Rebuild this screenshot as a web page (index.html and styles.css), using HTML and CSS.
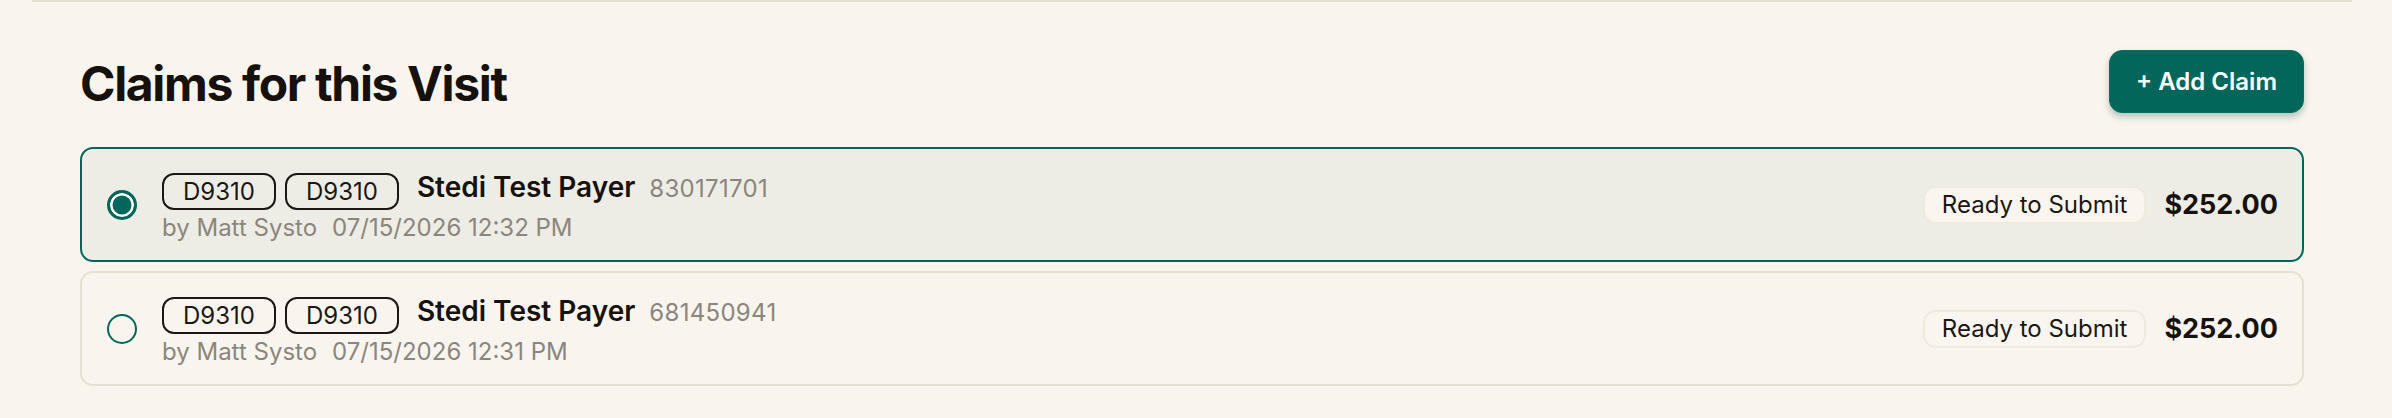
FILE: index.html
```html
<!DOCTYPE html>
<html lang="en">
<head>
<meta charset="utf-8">
<title>Claims for this Visit</title>
<link rel="stylesheet" href="styles.css">
</head>
<body>
<section class="claims">
  <header class="claims-head">
    <h2 class="claims-title">Claims for this Visit</h2>
    <button class="btn-add" type="button">+ Add Claim</button>
  </header>
  <div class="claim-list">
    <div class="claim claim--selected">
      <span class="radio radio--checked"></span>
      <div class="claim-main">
        <div class="claim-row">
          <div class="codes">
            <span class="code">D9310</span>
            <span class="code">D9310</span>
          </div>
          <div class="payer">
            <span class="payer-name">Stedi Test Payer</span>
            <span class="payer-id">830171701</span>
          </div>
        </div>
        <div class="claim-meta">
          <span>by Matt Systo</span>
          <span>07/15/2026 12:32 PM</span>
        </div>
      </div>
      <div class="claim-side">
        <span class="status">Ready to Submit</span>
        <span class="amount">$252.00</span>
      </div>
    </div>
    <div class="claim">
      <span class="radio"></span>
      <div class="claim-main">
        <div class="claim-row">
          <div class="codes">
            <span class="code">D9310</span>
            <span class="code">D9310</span>
          </div>
          <div class="payer">
            <span class="payer-name">Stedi Test Payer</span>
            <span class="payer-id">681450941</span>
          </div>
        </div>
        <div class="claim-meta">
          <span>by Matt Systo</span>
          <span>07/15/2026 12:31 PM</span>
        </div>
      </div>
      <div class="claim-side">
        <span class="status">Ready to Submit</span>
        <span class="amount">$252.00</span>
      </div>
    </div>
  </div>
</section>
</body>
</html>
```
FILE: styles.css
```css
* { box-sizing: border-box; }

html, body {
  margin: 0;
  padding: 0;
  background: #f9f5ee;
}

body {
  font-family: Inter, "Noto Sans", "Liberation Sans", sans-serif;
  color: #17120e;
  height: 418px;
  overflow: hidden;
}

.claims {
  margin: 0 40px 0 32px;
  border-top: 2px solid #e5e0d3;
  padding: 48px 48px 0;
}

.claims-head {
  display: flex;
  align-items: center;
  justify-content: space-between;
  height: 63px;
  margin-bottom: 34px;
}

.claims-title {
  margin: 0;
  font-size: 48px;
  font-weight: 700;
  line-height: 63px;
  letter-spacing: -1.35px;
  color: #17110d;
  position: relative;
  top: 2px;
}

.btn-add {
  height: 63px;
  padding: 0 26px;
  border: 1px solid #0b6d61;
  border-radius: 13px;
  background: #02665a;
  color: #ffffff;
  font-family: Inter, "Noto Sans", sans-serif;
  font-size: 24px;
  font-weight: 600;
  box-shadow: 0 4px 7px rgba(0, 70, 60, 0.28);
}

.claim-list {
  display: flex;
  flex-direction: column;
  gap: 9px;
}

.claim {
  display: flex;
  align-items: center;
  gap: 25px;
  height: 115px;
  padding: 0 24px 0 25px;
  border: 2px solid #e5e0d2;
  border-radius: 13px;
  background: #f9f5ee;
}

.claim--selected {
  border-color: #02665a;
  background: #eeede5;
}

.radio {
  flex: none;
  width: 30px;
  height: 30px;
  border: 2px solid #02665a;
  border-radius: 50%;
}

.radio--checked {
  border-width: 3px;
  background: #02665a;
  box-shadow: inset 0 0 0 2.5px #ffffff;
}

.claim-main {
  flex: 1;
  display: flex;
  flex-direction: column;
  gap: 3px;
  padding-top: 6px;
}

.claim-row {
  display: flex;
  align-items: flex-start;
  gap: 18px;
}

.codes {
  display: flex;
  gap: 9px;
}

.code {
  height: 37px;
  padding: 0 19px;
  border: 2px solid #1c1713;
  border-radius: 12px;
  font-size: 24px;
  line-height: 33px;
  color: #1c1713;
}

.payer {
  display: flex;
  align-items: baseline;
  gap: 14px;
}

.payer-name {
  font-size: 28px;
  font-weight: 600;
  line-height: 28px;
  color: #17120e;
}

.payer-id {
  font-size: 24px;
  letter-spacing: 0.3px;
  color: #8b857d;
}

.claim-meta {
  display: flex;
  gap: 15px;
  font-size: 24px;
  line-height: 30px;
  color: #8b857d;
}

.claim-side {
  display: flex;
  align-items: center;
  gap: 18px;
}

.status {
  height: 38px;
  padding: 0 17px;
  border: 2px solid #efe9de;
  border-radius: 13px;
  background: #faf6ef;
  font-size: 24px;
  line-height: 34px;
  color: #1c1713;
}

.amount {
  font-size: 27px;
  font-weight: 700;
  color: #17120e;
}
```
